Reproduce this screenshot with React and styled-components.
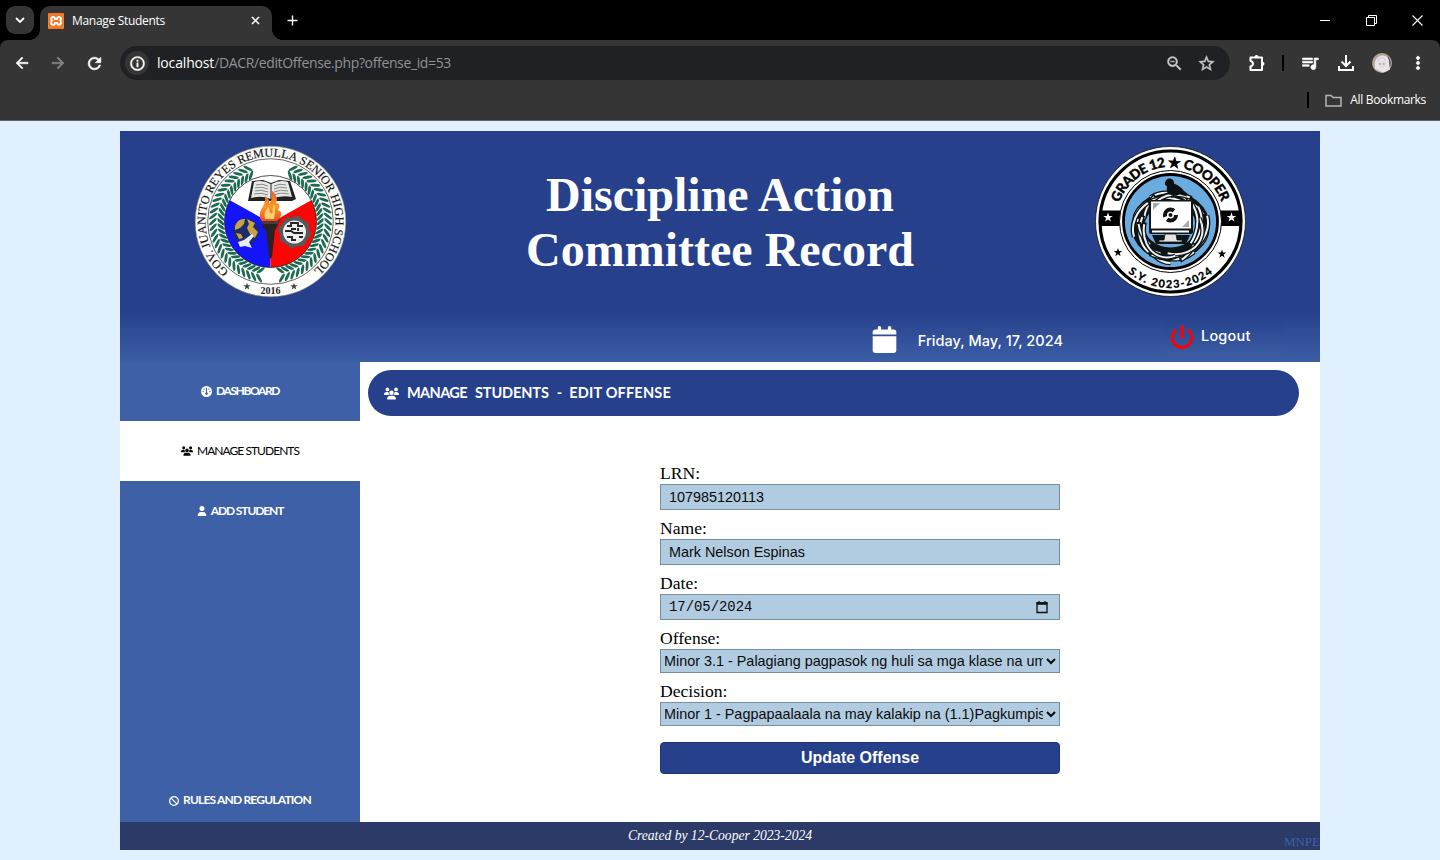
import React from 'react';
import styled, { createGlobalStyle } from 'styled-components';
import { MdArrowBack, MdArrowForward, MdRefresh, MdInfoOutline, MdStarBorder, MdQueueMusic, MdMoreVert, MdZoomOut, MdAdd, MdClose } from 'react-icons/md';
import { FaUsers, FaUser, FaBan, FaCalendar, FaGauge } from 'react-icons/fa6';
import { SiXampp } from 'react-icons/si';

const Global = createGlobalStyle`
  * { box-sizing: border-box; }
  body { margin: 0; background: #e0f0ff; font-family: "Liberation Serif", serif; overflow: hidden; }
`;

const serif = '"Liberation Serif", "Times New Roman", serif';
const ui = '"Open Sans", "Noto Sans", sans-serif';
const geo = 'Lato, sans-serif';

/* ---------- browser window ---------- */
const Browser = styled.header`
  height: 121px;
  background: #000;
  color: #fff;
  font-family: ${ui};
  svg path[fill="none"] { stroke: none; }
`;
const TabStrip = styled.div`
  height: 40px;
  display: flex;
  padding: 6px 0 0 6px;
`;
const TabSearch = styled.div`
  width: 28px;
  height: 28px;
  border-radius: 9px;
  background: #353535;
  display: grid;
  place-items: center;
  margin-right: 6px;
`;
const Tab = styled.div`
  position: relative;
  width: 232px;
  height: 34px;
  padding: 0 10px 5px 8px;
  display: flex;
  align-items: center;
  border-radius: 10px 10px 0 0;
  background: #353535;
  &::before, &::after {
    content: "";
    position: absolute;
    bottom: 0;
    width: 10px;
    height: 10px;
    background: radial-gradient(circle at 0 0, transparent 9.5px, #353535 10px);
  }
  &::before { left: -10px; }
  &::after { right: -10px; background: radial-gradient(circle at 100% 0, transparent 9.5px, #353535 10px); }
`;
const Favicon = styled.span`
  display: grid;
  width: 16px;
  height: 16px;
  background: #fff;
  color: #f37623;
  border-radius: 2px;
  margin-right: 8px;
`;
const TabTitle = styled.span`
  font-size: 12px;
  letter-spacing: -0.3px;
  white-space: nowrap;
`;
const TabClose = styled.span`
  display: grid;
  margin-left: auto;
  svg { stroke: currentColor; stroke-width: 1; }
`;
const NewTab = styled.span`
  display: grid;
  place-items: center;
  width: 40px;
  height: 28px;
`;
const WindowButtons = styled.div`
  margin-left: auto;
  display: flex;
  height: 28px;
`;
const WindowButton = styled.span`
  width: 46px;
  display: grid;
  place-items: center;
`;
const Toolbars = styled.div`
  height: 81px;
  background: #353535;
  border-radius: 8px 8px 0 0;
  border-bottom: 1px solid #606468;
`;
const Toolbar = styled.div`
  display: flex;
  align-items: center;
  height: 46px;
  padding: 0 4px;
`;
const ToolSlot = styled.span`
  width: 36px;
  height: 36px;
  display: grid;
  place-items: center;
  color: ${p => (p.$dim ? '#858585' : '#fff')};
  > svg[stroke="currentColor"] { stroke-width: 0.7; }
`;
const AddressBar = styled.div`
  width: 1110px;
  height: 34px;
  margin: 0 9px 0 8px;
  padding: 0 8px 0 5px;
  border-radius: 17px;
  background: #202124;
  display: flex;
  align-items: center;
  font-size: 14px;
`;
const SiteInfo = styled.span`
  width: 24px;
  height: 24px;
  border-radius: 50%;
  background: #353535;
  display: grid;
  place-items: center;
  margin-right: 8px;
  svg { stroke-width: 0.6; }
`;
const Host = styled.span`
  margin-top: -1px;
  letter-spacing: -0.17px;
`;
const UrlPath = styled.span`
  margin-top: -1px;
  color: #8f9295;
  letter-spacing: -0.36px;
`;
const AddressIcons = styled.span`
  margin-left: auto;
  display: flex;
  color: #c7c7c7;
`;
const AddressIcon = styled.span`
  width: 32px;
  display: grid;
  place-items: center;
  svg { stroke-width: 0.5; }
`;
const Divider = styled.span`
  width: 2px;
  height: 16px;
  background: #000;
  margin: ${p => p.$m};
`;
const Avatar = styled.svg`
  width: 20px;
  height: 20px;
  display: block;
`;
const Bookmarks = styled.div`
  height: 28px;
  display: flex;
  align-items: center;
  justify-content: flex-end;
  padding-right: 14px;
  font-size: 12px;
`;
const BookmarkLabel = styled.span`
  margin: -2px 0 0 8px;
  letter-spacing: -0.33px;
`;

/* ---------- page ---------- */
const Page = styled.div`
  width: 1200px;
  height: 719px;
  margin: 10px auto 0;
  background: #fff;
  display: flex;
  flex-direction: column;
`;
const Banner = styled.div`
  height: 231px;
  background: linear-gradient(#26408b 0, #26408b 180px, #3d60a7 234px);
`;
const BannerTop = styled.div`
  height: 185px;
  display: grid;
  grid-template-columns: 300px 600px 300px;
  justify-items: center;
  padding-top: 15px;
`;
const Seal = styled.svg`
  width: 151px;
  height: 151px;
  display: block;
  overflow: visible;
`;
const Title = styled.h1`
  margin: 21px 0 0;
  color: #fff;
  font: bold 48px/55px ${serif};
  text-align: center;
  width: 420px;
`;
const BannerBar = styled.div`
  height: 46px;
  display: flex;
  justify-content: flex-end;
  padding-right: 36px;
  color: #fff;
  font-family: Inter, sans-serif;
  font-weight: 500;
  font-size: 14.5px;
`;
const Today = styled.div`
  display: flex;
  align-items: center;
  gap: 20px;
  margin-right: 101px;
  height: 47px;
`;
const DateText = styled.span`
  padding-top: 1px;
  letter-spacing: 0.03px;
  white-space: nowrap;
`;
const Logout = styled.div`
  width: 120px;
  height: 40px;
  margin-top: 1px;
  padding-left: 6px;
  display: flex;
  align-items: center;
  gap: 7px;
  background: linear-gradient(#27428d, #3b5ca3);
`;
const LogoutText = styled.span`
  margin-top: -4px;
  letter-spacing: 0.2px;
`;
const Body = styled.div`
  display: flex;
  height: 460px;
`;
const Sidebar = styled.nav`
  width: 240px;
  background: #3e60a7;
  display: flex;
  flex-direction: column;
`;
const NavItem = styled.div`
  height: ${p => p.$h || 60}px;
  margin-top: ${p => (p.$last ? 'auto' : '0')};
  display: flex;
  align-items: center;
  justify-content: center;
  gap: 4px;
  background: ${p => (p.$active ? '#fff' : 'transparent')};
  color: ${p => (p.$active ? '#000' : '#fff')};
  font: ${p => (p.$active ? 400 : 700)} 12px ${geo};
`;
const NavText = styled.span`
  letter-spacing: ${p => p.$ls}px;
  margin-top: -2px;
  white-space: nowrap;
`;
const Main = styled.main`
  width: 960px;
  padding: 8px 21px 0 8px;
`;
const Heading = styled.div`
  height: 46px;
  border-radius: 23px;
  background: #26408b;
  color: #fff;
  display: flex;
  align-items: center;
  padding-left: 16px;
  font: 700 14.5px ${geo};
  gap: 8px;
`;
const HeadingWord = styled.span`
  letter-spacing: ${p => p.$ls || 0}px;
  margin-top: -2px;
  white-space: nowrap;
`;
const Form = styled.form`
  width: 400px;
  margin: 47px 0 0 292px;
`;
const Field = styled.div`
  margin-bottom: 8px;
`;
const Label = styled.label`
  display: block;
  height: 21px;
  font: 17.6px/21px ${serif};
  color: #000;
`;
const Input = styled.input`
  display: block;
  width: 400px;
  height: 26px;
  padding: 0 8px;
  border: 1px solid #768fa1;
  border-radius: 0;
  background: #b1cce0;
  font: 14.4px "Liberation Sans", Arial, sans-serif;
  color: #0b0b0b;
`;
const DateBox = styled.div`
  display: flex;
  align-items: center;
  justify-content: space-between;
  width: 400px;
  height: 26px;
  padding: 0 10px 0 8px;
  border: 1px solid #768fa1;
  background: #b1cce0;
  font: 13.9px "Liberation Mono", monospace;
  color: #0b0b0b;
`;
const Select = styled.select`
  display: block;
  width: 400px;
  height: 24px;
  padding: 0;
  border: 1px solid #768fa1;
  border-radius: 0;
  background: #b1cce0;
  font: 14.4px "Liberation Sans", Arial, sans-serif;
  text-indent: -1px;
  color: #0b0b0b;
`;
const Submit = styled.button`
  display: block;
  width: 400px;
  height: 32px;
  margin-top: 16px;
  padding: 0;
  border: 1px solid #1e3573;
  border-radius: 4px;
  background: #26408b;
  color: #fff;
  font: bold 16px "Liberation Sans", Arial, sans-serif;
`;
const Footer = styled.footer`
  position: relative;
  height: 28px;
  background: #2b3a67;
  color: #fff;
  text-align: center;
  font: italic 13.6px/27px ${serif};
`;
const Initials = styled.span`
  position: absolute;
  right: 0;
  bottom: 0;
  font: 13px/17px ${serif};
  color: #3e60a7;
`;

const C = 75.5;
const polar = (cx, cy, r, deg) => {
  const a = (deg * Math.PI) / 180;
  return [cx + r * Math.sin(a), cy - r * Math.cos(a)];
};
const arc = (r, from, to, sweep) => {
  const [x1, y1] = polar(C, C, r, from);
  const [x2, y2] = polar(C, C, r, to);
  const large = Math.abs(to - from) > 180 ? 1 : 0;
  return `M${x1} ${y1}A${r} ${r} 0 ${large} ${sweep} ${x2} ${y2}`;
};
const starPoints = (cx, cy, r) =>
  Array.from({ length: 10 }, (_, i) => polar(cx, cy, i % 2 ? r * 0.4 : r, i * 36).join(',')).join(' ');

const leaves = [];
for (let d = 23; d <= 173; d += 5.6) {
  [-1, 1].forEach(s => {
    [50, 57.6].forEach((r, k) => {
      const [x, y] = polar(C, C, r, s * d);
      leaves.push({ x, y, rot: s * (d + (k ? 42 : -42)), key: `${s}${d}${k}` });
    });
  });
}

function SchoolSeal() {
  return (
    <Seal viewBox="0 0 151 151">
      <defs>
        <path id="schoolArc" d={arc(65, -140, 140, 1)} />
        <clipPath id="shield"><circle cx={C} cy={C} r="46" /></clipPath>
        <linearGradient id="fire" x1="0" y1="0" x2="0" y2="1">
          <stop offset="0" stopColor="#f4571c" /><stop offset=".55" stopColor="#fb9a2a" /><stop offset="1" stopColor="#ef4a16" />
        </linearGradient>
      </defs>
      <circle cx={C} cy={C} r="75.3" fill="#fdfdfb" stroke="#8f8f80" strokeWidth=".6" />
      <circle cx={C} cy={C} r="62.8" fill="#fff" stroke="#222" strokeWidth=".7" />
      {leaves.map(l => (
        <ellipse key={l.key} rx="1.45" ry="5" fill="#1c6b50" transform={`translate(${l.x} ${l.y}) rotate(${l.rot})`} />
      ))}
      <path d={arc(53.5, 22, 174, 1) + arc(53.5, -22, -174, 0)} fill="none" stroke="#fff" strokeWidth=".8" />
      <g clipPath="url(#shield)">
        <circle cx={C} cy={C} r="46" fill="#fff" />
        <path d="M75.5 77 22 47V130H75.5Z" fill="#1414fa" />
        <path d="M75.5 77 129 47V130H75.5Z" fill="#fb0505" />
      </g>
      <circle cx={C} cy={C} r="46" fill="none" stroke="#222" strokeWidth=".8" />
      <path d="M57 35 53 55 75 55 97 55 101 53 95 35 84 34 76 37 68 34Z" fill="#222" />
      <path d="M59 36 56 52Q67 49 75.500 53V38Q67 33 59 36ZM93 36 97 51Q86 49 76.500 53V38Q85 33 93 36Z" fill="#e7e7e5" />
      <path d="M61 39q6-2 12 1M60 42q6-2 13 1M60 45q6-2 13 1M59 48q7-2 14 1M79 40q6-3 12-1M79 43q6-3 13-1M79 46q6-3 14-1M79 49q6-3 15-1" fill="none" stroke="#888" strokeWidth="1" />
      <path d="M69 75h15l-2 6-2 3-3 27q-2 3-3 0l-3-27-4-3Z" fill="#282225" />
      <path d="M65 73h21l-3 5H68Z" fill="#51363b" />
      <path d="M67 75C60 65 72 61 70 50Q75 53 74 58Q79 52 76 44Q84 50 81 57Q87 58 83 64Q90 67 82 75Z" fill="url(#fire)" />
      <path d="M70 73Q68 66 74 61Q74 66 77 68Q78 61 79 58Q81 65 79 73Z" fill="#ffd070" />
      <circle cx="51" cy="85.500" r="13" fill="#1c2b69" />
      <path d="M40 80Q43 72 50 73L49 78 45 82 40 84ZM52 73 60 77 58 81 63 86 60 92 55 88 52 82 54 78ZM41 87 46 88 48 92 44 93Z" fill="#c9a243" />
      <path d="m43 96 6-2 8-6 2 2-5 6 3 6-7-2-5 1Z" fill="#e8edf5" />
      <circle cx="99.500" cy="86" r="13" fill="none" stroke="#555a5d" strokeWidth="4" />
      <circle cx="99.500" cy="86" r="15" fill="none" stroke="#555a5d" strokeWidth="2.500" strokeDasharray="5.500 6.280" />
      <circle cx="99.500" cy="86" r="11.500" fill="#eee" />
      <path d="M92 80h4v-3h7v3h5M90 85h6l3 2h9M92 91h5v3h4M103 82v3M104 91h4M96 83h5" fill="none" stroke="#252525" strokeWidth="1.900" />
      <text fontFamily="Liberation Serif" fontSize="12" fill="#111" stroke="#111" strokeWidth=".15">
        <textPath href="#schoolArc" textLength="316" lengthAdjust="spacingAndGlyphs">GOV. JUANITO REYES REMULLA SENIOR HIGH SCHOOL</textPath>
      </text>
      <text x={C} y="147.500" textAnchor="middle" fontFamily="Liberation Serif" fontWeight="bold" fontSize="10" fill="#222">2016</text>
      <polygon points={starPoints(52, 140.500, 3.800)} fill="#444" />
      <polygon points={starPoints(99, 140.500, 3.800)} fill="#444" />
    </Seal>
  );
}

const strands = [
  [38, 29, 8], [36, 31, 48], [38, 27, 90], [35, 29, 130], [39, 31, 165], [34, 27, 25], [33, 26, 110],
];

function CooperSeal() {
  return (
    <Seal viewBox="0 0 151 151">
      <defs>
        <path id="gradeArc" d={arc(54.500, -70, 70, 1)} />
        <path id="yearArc" d={arc(66.500, 220, 140, 0)} />
      </defs>
      <circle cx={C} cy={C} r="75" fill="#fff" stroke="#111" strokeWidth=".8" />
      <circle cx={C} cy={C} r="70.500" fill="#fff" stroke="#000" strokeWidth="3.200" />
      <path d="M5 64.500H26V80H5ZM125 64.500H146V80H125Z" fill="#000" />
      <circle cx={C} cy={C} r="51" fill="#fff" stroke="#000" strokeWidth="1" />
      <circle cx={C} cy={C} r="47" fill="#6aabe0" stroke="#000" strokeWidth="2.800" />
      <ellipse cx={C} cy="80" rx="32.500" ry="28" fill="none" stroke="#0e1516" strokeWidth="13" />
      {strands.map(([rx, ry, d]) => (
        <g key={d} transform={`rotate(${d} 75.5 80)`} fill="none">
          <ellipse cx={C} cy="80" rx={rx - 1} ry={ry} stroke="#0e1516" strokeWidth="4.600" strokeDasharray="40 18 26 24" />
          <ellipse cx={C} cy="80" rx={rx - 1} ry={ry} stroke="#f1f3f3" strokeWidth="2" strokeDasharray="38 20 24 26" />
        </g>
      ))}
      <rect x="54" y="54" width="44" height="34" rx="2" fill="#111819" />
      <rect x="56" y="55.500" width="40" height="27" fill="#fff" />
      <path d="M58 57h7l-7 7ZM94 81h-7l7-7Z" fill="#aaa" />
      <path d="M57 85.500h37" stroke="#fff" strokeWidth="2" />
      <path d="M57 89H95L91 98H61Z" fill="#0e1516" />
      <path d="M70 88h11l1 6h5v2H64v-2h5Z" fill="#e5e5e5" stroke="#111" strokeWidth=".8" />
      <circle cx={C} cy="69" r="5.500" fill="none" stroke="#111" strokeWidth="4" strokeDasharray="12 3 14 5" />
      <circle cx={C} cy="69" r="2" fill="#111" />
      <path d="M70 37q1-5 5-4.500 4 .5 4 5 9 3 13 13l-7-2-4 1-7-1q-3-3-2-8l-2-2Z" fill="#0b1014" />
      <path d="M77 48v4M81 48v4" stroke="#0b1014" strokeWidth="1" />
      <text fontFamily="Lato" fontWeight="900" fontSize="13.600" fill="#000" stroke="#000" strokeWidth=".35">
        <textPath href="#gradeArc" textLength="132">GRADE 12 ★ COOPER</textPath>
      </text>
      <text fontFamily="Lato" fontWeight="900" fontSize="11" fill="#000" stroke="#000" strokeWidth=".2">
        <textPath href="#yearArc" textLength="92">S.Y. 2023-2024</textPath>
      </text>
      <polygon points={starPoints(13, 71.500, 5)} fill="#fff" />
      <polygon points={starPoints(136.500, 71.500, 5)} fill="#fff" />
      <polygon points={starPoints(23, 106.500, 4.500)} fill="#000" />
      <polygon points={starPoints(127, 108, 4.500)} fill="#000" />
    </Seal>
  );
}

function PowerIcon() {
  return (
    <svg width="24" height="24" viewBox="0 0 24 24" fill="none" stroke="#f00">
      <path d="M6.200 4.800A9.800 9.800 0 1 0 17.800 4.800" strokeWidth="2.800" />
      <path d="M12 .5V13.500" strokeWidth="3" />
    </svg>
  );
}

function ExtensionIcon() {
  return (
    <svg width="18" height="18" viewBox="0 0 18 18" fill="none" stroke="#fff" strokeWidth="2" strokeLinejoin="round">
      <path d="M2.500 3.500h11.500v12.500H2.500v-3.500q2.500-.6 2.500-2.700T2.500 7Z" />
      <path d="M6.500 3a2 2 0 0 1 4 0ZM14.500 7.700a2 2 0 0 1 0 4Z" fill="#fff" stroke="none" />
    </svg>
  );
}

export default function App() {
  return (
    <>
      <Global />
      <Browser>
        <TabStrip>
          <TabSearch><svg width="10" height="6" fill="none" stroke="#fff" strokeWidth="1.800"><path d="m1 1 4 4 4-4" /></svg></TabSearch>
          <Tab>
            <Favicon><SiXampp size={16} /></Favicon>
            <TabTitle>Manage Students</TabTitle>
            <TabClose><MdClose size={13} /></TabClose>
          </Tab>
          <NewTab><MdAdd size={17} /></NewTab>
          <WindowButtons>
            <WindowButton><svg width="10" height="10" stroke="#fff"><path d="M0 5.500H10" /></svg></WindowButton>
            <WindowButton><svg width="11" height="11" fill="none" stroke="#fff"><path d="M.5 2.500h8v8h-8ZM2.500 2.500v-2h8v8h-2" /></svg></WindowButton>
            <WindowButton><svg width="11" height="11" stroke="#fff" strokeWidth="1.100"><path d="m.5.5 10 10M10.500.5l-10 10" /></svg></WindowButton>
          </WindowButtons>
        </TabStrip>
        <Toolbars>
          <Toolbar>
            <ToolSlot><MdArrowBack size={18} /></ToolSlot>
            <ToolSlot $dim><MdArrowForward size={18} /></ToolSlot>
            <ToolSlot><MdRefresh size={19} /></ToolSlot>
            <AddressBar>
              <SiteInfo><MdInfoOutline size={17} /></SiteInfo>
              <Host>localhost</Host><UrlPath>/DACR/editOffense.php?offense_id=53</UrlPath>
              <AddressIcons>
                <AddressIcon><MdZoomOut size={19} /></AddressIcon>
                <AddressIcon><MdStarBorder size={19} /></AddressIcon>
              </AddressIcons>
            </AddressBar>
            <ToolSlot><ExtensionIcon /></ToolSlot>
            <Divider $m="0 8px 0 7px" />
            <ToolSlot><MdQueueMusic size={20} /></ToolSlot>
            <ToolSlot><svg width="18" height="18" fill="none" stroke="#fff" strokeWidth="2"><path d="M9 1v11M4.500 7.500 9 12l4.500-4.500M2 12v4h14v-4" /></svg></ToolSlot>
            <ToolSlot>
              <Avatar viewBox="0 0 20 20">
                <circle cx="10" cy="10" r="10" fill="#b9a48f" />
                <path d="M16 3q4 6 2 11l-4 4Z" fill="#56525f" />
                <path d="M3 16Q1 5 9 2.500q8-1 8 7l1 7-7 3Z" fill="#e6e7ec" />
                <path d="M6 10q4-4 8 0-1 5-4 5t-4-5Z" fill="#f0d9d4" />
                <path d="M5 10q3-5 5-5 3 1 4 6 1-6-4-7-5 0-5 6Z" fill="#cfd2dc" />
                <path d="M7 11h1.500M11 11h1.500" stroke="#66768c" />
              </Avatar>
            </ToolSlot>
            <ToolSlot><MdMoreVert size={20} /></ToolSlot>
          </Toolbar>
          <Bookmarks>
            <Divider $m="0 16px 0 0" />
            <svg width="17" height="13" fill="none" stroke="#b5b5b5" strokeWidth="1.500"><path d="M1 1.500h5l2 2h8v8.500H1Z" /></svg>
            <BookmarkLabel>All Bookmarks</BookmarkLabel>
          </Bookmarks>
        </Toolbars>
      </Browser>
      <Page>
        <Banner>
          <BannerTop>
            <SchoolSeal />
            <Title>Discipline Action Committee Record</Title>
            <CooperSeal />
          </BannerTop>
          <BannerBar>
            <Today><FaCalendar size={27} /><DateText>Friday, May, 17, 2024</DateText></Today>
            <Logout><PowerIcon /><LogoutText>Logout</LogoutText></Logout>
          </BannerBar>
        </Banner>
        <Body>
          <Sidebar>
            <NavItem $h={59}><FaGauge size={11} /><NavText $ls={-1.4}>DASHBOARD</NavText></NavItem>
            <NavItem $active><FaUsers size={12} /><NavText $ls={-0.95}>MANAGE STUDENTS</NavText></NavItem>
            <NavItem><FaUser size={10} /><NavText $ls={-1.1}>ADD STUDENT</NavText></NavItem>
            <NavItem $last $h={43}><FaBan size={10} /><NavText $ls={-0.8}>RULES AND REGULATION</NavText></NavItem>
          </Sidebar>
          <Main>
            <Heading>
              <FaUsers size={15} />
              <HeadingWord $ls={-0.6}>MANAGE</HeadingWord>
              <HeadingWord $ls={-0.1}>STUDENTS</HeadingWord>
              <HeadingWord $ls={-1}>-</HeadingWord>
              <HeadingWord $ls={0.2}>EDIT OFFENSE</HeadingWord>
            </Heading>
            <Form>
              <Field><Label>LRN:</Label><Input defaultValue="107985120113" /></Field>
              <Field><Label>Name:</Label><Input defaultValue="Mark Nelson Espinas" /></Field>
              <Field>
                <Label>Date:</Label>
                <DateBox>
                  17/05/2024
                  <svg width="14" height="14" fill="none" stroke="#111"><path d="M2 3h10v9.500H2Z" strokeWidth="1.300" /><path d="M1.500 3.500h11" strokeWidth="2.500" /><path d="M4 1v2M10 1v2" strokeWidth="1.300" /></svg>
                </DateBox>
              </Field>
              <Field><Label>Offense:</Label><Select><option>Minor 3.1 - Palagiang pagpasok ng huli sa mga klase na umabot</option></Select></Field>
              <Field><Label>Decision:</Label><Select><option>Minor 1 - Pagpapaalaala na may kalakip na (1.1)Pagkumpiska</option></Select></Field>
              <Submit type="button">Update Offense</Submit>
            </Form>
          </Main>
        </Body>
        <Footer>Created by 12-Cooper 2023-2024<Initials>MNPE</Initials></Footer>
      </Page>
    </>
  );
}
